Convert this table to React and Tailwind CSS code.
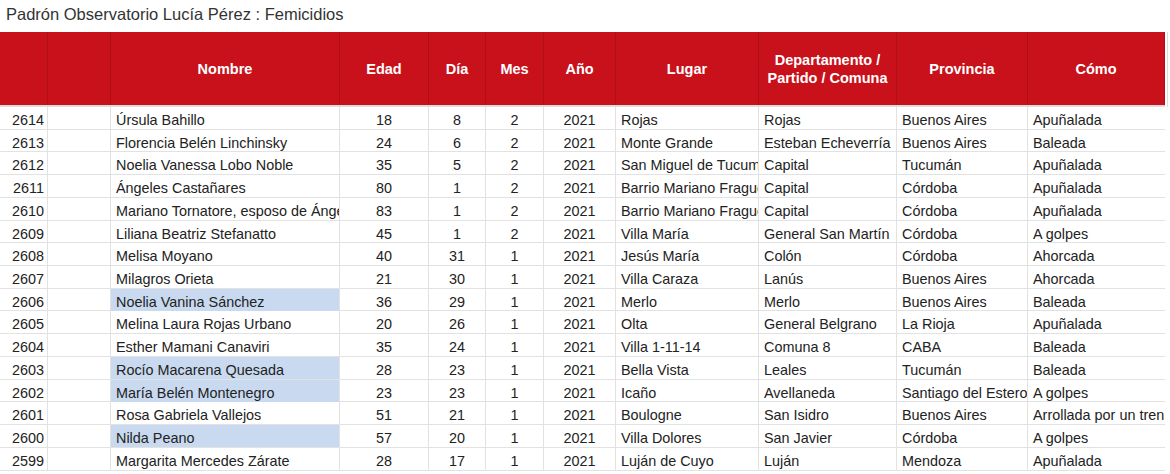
const cols = "grid grid-cols-[48px_63px_229px_89px_57px_58px_72px_143px_138px_131px_137px]";

const rows = [
  ["2614", "Úrsula Bahillo", "18", "8", "2", "2021", "Rojas", "Rojas", "Buenos Aires", "Apuñalada", false],
  ["2613", "Florencia Belén Linchinsky", "24", "6", "2", "2021", "Monte Grande", "Esteban Echeverría", "Buenos Aires", "Baleada", false],
  ["2612", "Noelia Vanessa Lobo Noble", "35", "5", "2", "2021", "San Miguel de Tucumán", "Capital", "Tucumán", "Apuñalada", false],
  ["2611", "Ángeles Castañares", "80", "1", "2", "2021", "Barrio Mariano Fragueiro", "Capital", "Córdoba", "Apuñalada", false],
  ["2610", "Mariano Tornatore, esposo de Ángeles", "83", "1", "2", "2021", "Barrio Mariano Fragueiro", "Capital", "Córdoba", "Apuñalada", false],
  ["2609", "Liliana Beatriz Stefanatto", "45", "1", "2", "2021", "Villa María", "General San Martín", "Córdoba", "A golpes", false],
  ["2608", "Melisa Moyano", "40", "31", "1", "2021", "Jesús María", "Colón", "Córdoba", "Ahorcada", false],
  ["2607", "Milagros Orieta", "21", "30", "1", "2021", "Villa Caraza", "Lanús", "Buenos Aires", "Ahorcada", false],
  ["2606", "Noelia Vanina Sánchez", "36", "29", "1", "2021", "Merlo", "Merlo", "Buenos Aires", "Baleada", true],
  ["2605", "Melina Laura Rojas Urbano", "20", "26", "1", "2021", "Olta", "General Belgrano", "La Rioja", "Apuñalada", false],
  ["2604", "Esther Mamani Canaviri", "35", "24", "1", "2021", "Villa 1-11-14", "Comuna 8", "CABA", "Baleada", false],
  ["2603", "Rocío Macarena Quesada", "28", "23", "1", "2021", "Bella Vista", "Leales", "Tucumán", "Baleada", true],
  ["2602", "María Belén Montenegro", "23", "23", "1", "2021", "Icaño", "Avellaneda", "Santiago del Estero", "A golpes", true],
  ["2601", "Rosa Gabriela Vallejos", "51", "21", "1", "2021", "Boulogne", "San Isidro", "Buenos Aires", "Arrollada por un tren", false],
  ["2600", "Nilda Peano", "57", "20", "1", "2021", "Villa Dolores", "San Javier", "Córdoba", "A golpes", true],
  ["2599", "Margarita Mercedes Zárate", "28", "17", "1", "2021", "Luján de Cuyo", "Luján", "Mendoza", "Apuñalada", false],
];

function Head({ children }) {
  return (
    <div className="flex items-center justify-center text-center border-r border-[#b20d15] leading-[18px] px-1">
      {children}
    </div>
  );
}

function Cell({ children, align = "left", blue = false, last = false }) {
  const a =
    align === "right" ? "text-right pr-[3px]" : align === "center" ? "text-center" : "text-left pl-[5px]";
  return (
    <div
      className={`${a} ${blue ? "bg-[#c9daf0]" : ""} ${last ? "overflow-visible" : "overflow-hidden border-r border-[#e2e2e2]"} whitespace-nowrap pt-[5px] leading-[17px]`}
    >
      {children}
    </div>
  );
}

export default function App() {
  return (
    <div className="w-[1170px] h-[474px] overflow-hidden bg-white font-['Liberation_Sans',Arial,sans-serif] text-[#222]">
      <div className="h-[32px] pl-[6px] pt-[5px] text-[16.5px] text-[#333] leading-[19px]">
        Padrón Observatorio Lucía Pérez : Femicidios
      </div>
      <div className="flex">
        <div className="w-[1165px]">
          <div className={`${cols} h-[75px] bg-[#c8111a] text-white font-bold text-[14.5px] border-b-2 border-[#dcdcdc]`}>
            <Head></Head>
            <Head></Head>
            <Head>Nombre</Head>
            <Head>Edad</Head>
            <Head>Día</Head>
            <Head>Mes</Head>
            <Head>Año</Head>
            <Head>Lugar</Head>
            <Head>
              Departamento /<br />Partido / Comuna
            </Head>
            <Head>Provincia</Head>
            <Head>Cómo</Head>
          </div>
          {rows.map((r) => (
            <div key={r[0]} className={`${cols} h-[22.73px] border-b border-[#e2e2e2] text-[14.4px]`}>
              <Cell align="right">{r[0]}</Cell>
              <Cell></Cell>
              <Cell blue={r[10]}>{r[1]}</Cell>
              <Cell align="center">{r[2]}</Cell>
              <Cell align="center">{r[3]}</Cell>
              <Cell align="center">{r[4]}</Cell>
              <Cell align="center">{r[5]}</Cell>
              <Cell>{r[6]}</Cell>
              <Cell>{r[7]}</Cell>
              <Cell>{r[8]}</Cell>
              <Cell last>{r[9]}</Cell>
            </div>
          ))}
        </div>
        <div className="flex-1">
          <div className="ml-[2px] h-[75px] border-l border-[#dedede]"></div>
        </div>
      </div>
    </div>
  );
}
